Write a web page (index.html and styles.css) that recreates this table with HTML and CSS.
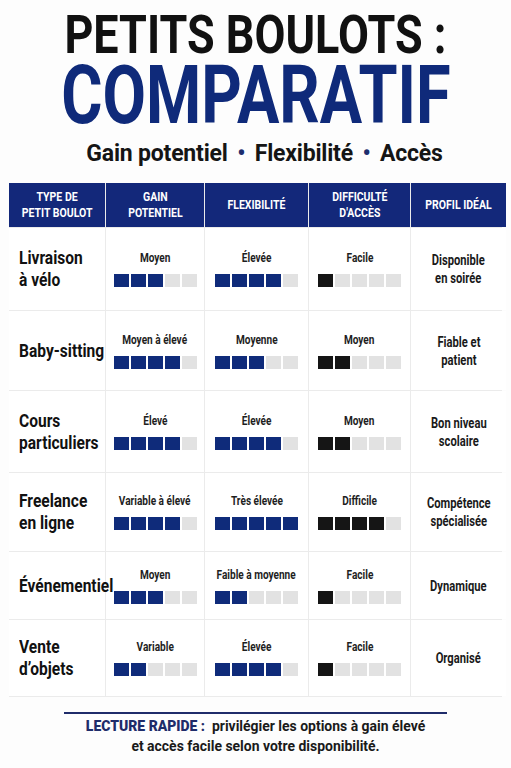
FILE: index.html
```html
<!DOCTYPE html>
<html lang="fr">
  <head>
    <meta charset="UTF-8" />
    <meta name="viewport" content="width=device-width, initial-scale=1.0" />
    <title>Petits boulots : comparatif</title>
    <link rel="stylesheet" href="styles.css">
  </head>
  <body>
    <div class="page">
      <h1 class="title">PETITS BOULOTS :</h1>
      <h2 class="title-big">COMPARATIF</h2>
      <p class="subtitle">Gain potentiel <span class="dot">•</span> Flexibilité <span class="dot">•</span> Accès</p>

      <div class="table">
        <div class="head"><span class="cx">TYPE DE<br>PETIT BOULOT</span></div>
        <div class="head"><span class="cx">GAIN<br>POTENTIEL</span></div>
        <div class="head"><span class="cx">FLEXIBILITÉ</span></div>
        <div class="head"><span class="cx">DIFFICULTÉ<br>D'ACCÈS</span></div>
        <div class="head"><span class="cx">PROFIL IDÉAL</span></div>

        <!-- Livraison -->
        <div class="cell name"><span class="cx">Livraison<br>à vélo</span></div>
        <div class="cell">
          <span class="label cx">Moyen</span>
          <div class="bar"><span class="on"></span><span class="on"></span><span class="on"></span><span></span><span></span></div>
        </div>
        <div class="cell">
          <span class="label cx">Élevée</span>
          <div class="bar"><span class="on"></span><span class="on"></span><span class="on"></span><span class="on"></span><span></span></div>
        </div>
        <div class="cell">
          <span class="label cx">Facile</span>
          <div class="bar dark"><span class="on"></span><span></span><span></span><span></span><span></span></div>
        </div>
        <div class="cell profile"><span class="cx">Disponible<br>en soirée</span></div>

        <!-- Baby-sitting -->
        <div class="cell name"><span class="cx">Baby-sitting</span></div>
        <div class="cell">
          <span class="label cx">Moyen à élevé</span>
          <div class="bar"><span class="on"></span><span class="on"></span><span class="on"></span><span class="on"></span><span></span></div>
        </div>
        <div class="cell">
          <span class="label cx">Moyenne</span>
          <div class="bar"><span class="on"></span><span class="on"></span><span class="on"></span><span></span><span></span></div>
        </div>
        <div class="cell">
          <span class="label cx">Moyen</span>
          <div class="bar dark"><span class="on"></span><span class="on"></span><span></span><span></span><span></span></div>
        </div>
        <div class="cell profile"><span class="cx">Fiable et<br>patient</span></div>

        <!-- Cours -->
        <div class="cell name"><span class="cx">Cours<br>particuliers</span></div>
        <div class="cell">
          <span class="label cx">Élevé</span>
          <div class="bar"><span class="on"></span><span class="on"></span><span class="on"></span><span class="on"></span><span></span></div>
        </div>
        <div class="cell">
          <span class="label cx">Élevée</span>
          <div class="bar"><span class="on"></span><span class="on"></span><span class="on"></span><span class="on"></span><span></span></div>
        </div>
        <div class="cell">
          <span class="label cx">Moyen</span>
          <div class="bar dark"><span class="on"></span><span class="on"></span><span></span><span></span><span></span></div>
        </div>
        <div class="cell profile"><span class="cx">Bon niveau<br>scolaire</span></div>

        <!-- Freelance -->
        <div class="cell name"><span class="cx">Freelance<br>en ligne</span></div>
        <div class="cell">
          <span class="label cx">Variable à élevé</span>
          <div class="bar"><span class="on"></span><span class="on"></span><span class="on"></span><span class="on"></span><span></span></div>
        </div>
        <div class="cell">
          <span class="label cx">Très élevée</span>
          <div class="bar"><span class="on"></span><span class="on"></span><span class="on"></span><span class="on"></span><span class="on"></span></div>
        </div>
        <div class="cell">
          <span class="label cx">Difficile</span>
          <div class="bar dark"><span class="on"></span><span class="on"></span><span class="on"></span><span class="on"></span><span></span></div>
        </div>
        <div class="cell profile"><span class="cx">Compétence<br>spécialisée</span></div>

        <!-- Evenementiel -->
        <div class="cell name"><span class="cx">Événementiel</span></div>
        <div class="cell">
          <span class="label cx">Moyen</span>
          <div class="bar"><span class="on"></span><span class="on"></span><span class="on"></span><span></span><span></span></div>
        </div>
        <div class="cell">
          <span class="label cx">Faible à moyenne</span>
          <div class="bar"><span class="on"></span><span class="on"></span><span></span><span></span><span></span></div>
        </div>
        <div class="cell">
          <span class="label cx">Facile</span>
          <div class="bar dark"><span class="on"></span><span></span><span></span><span></span><span></span></div>
        </div>
        <div class="cell profile"><span class="cx">Dynamique</span></div>

        <!-- Vente -->
        <div class="cell name"><span class="cx">Vente<br>d’objets</span></div>
        <div class="cell">
          <span class="label cx">Variable</span>
          <div class="bar"><span class="on"></span><span class="on"></span><span></span><span></span><span></span></div>
        </div>
        <div class="cell">
          <span class="label cx">Élevée</span>
          <div class="bar"><span class="on"></span><span class="on"></span><span class="on"></span><span class="on"></span><span></span></div>
        </div>
        <div class="cell">
          <span class="label cx">Facile</span>
          <div class="bar dark"><span class="on"></span><span></span><span></span><span></span><span></span></div>
        </div>
        <div class="cell profile"><span class="cx">Organisé</span></div>
      </div>

      <div class="footer">
        <span class="footer-text"><strong>LECTURE RAPIDE :</strong>&nbsp; privilégier les options à gain élevé<br>et accès facile selon votre disponibilité.</span>
      </div>
    </div>
  </body>
</html>
```

FILE: styles.css
```css
* {
  margin: 0;
  padding: 0;
  box-sizing: border-box;
}

body {
  font-family: 'Roboto', 'Liberation Sans', sans-serif;
  background: #fdfdfd;
  color: #151515;
}

.page {
  width: 511px;
  padding: 11px 9px 0;
  display: flex;
  flex-direction: column;
  align-items: center;
}

/* condensed look: Roboto squeezed horizontally */
.cx {
  display: inline-block;
  white-space: nowrap;
  transform: scaleX(0.84);
}

.title {
  font-size: 53.5px;
  line-height: 48px;
  font-weight: 700;
  color: #111;
  white-space: nowrap;
  transform: scaleX(0.84);
}

.title-big {
  font-size: 82px;
  line-height: 72px;
  font-weight: 700;
  color: #0f2a7a;
  white-space: nowrap;
  transform: scaleX(0.77);
}

.subtitle {
  margin-top: 9px;
  margin-left: 18px;
  font-size: 23px;
  line-height: 28px;
  font-weight: 700;
  color: #151515;
  letter-spacing: -0.2px;
}

.dot {
  color: #1d2e6e;
  margin: 0 4px;
}

.table {
  margin-top: 15px;
  width: 493px;
  display: grid;
  grid-template-columns: 96px 98px 103px 101px 95px;
  grid-template-rows: 44px 82px 79px 81px 78px 67px 76px;
  background: #ebebeb;
  gap: 1px;
  border-bottom: 1px solid #ebebeb;
}

.head {
  background: #13287a;
  color: #fff;
  font-size: 12.5px;
  font-weight: 700;
  line-height: 16px;
  text-align: center;
  display: flex;
  align-items: center;
  justify-content: center;
}

.cell {
  background: #fff;
  display: flex;
  flex-direction: column;
  align-items: center;
  justify-content: center;
  gap: 9px;
}

.cell.name {
  align-items: flex-start;
  padding-left: 10px;
  font-size: 18.5px;
  line-height: 22px;
  font-weight: 700;
  color: #111;
}

.cell.name .cx {
  transform-origin: left center;
}

.cell.profile {
  font-size: 14px;
  line-height: 18px;
  font-weight: 700;
  text-align: center;
  color: #1a1a1a;
}

.cell.profile .cx {
  transform: scaleX(0.8);
}

.label {
  font-size: 12px;
  font-weight: 700;
  color: #1e1e1e;
}

.bar {
  display: flex;
  gap: 2px;
}

.bar span {
  width: 15px;
  height: 13px;
  background: #e2e2e2;
}

.bar span.on {
  background: #0f2b7a;
}

.bar.dark span.on {
  background: #151515;
}

.footer {
  margin-top: 15px;
  width: 383px;
  border-top: 2px solid #1f2c6a;
  padding-top: 2px;
  text-align: center;
  font-size: 15.5px;
  line-height: 20px;
  font-weight: 700;
  color: #1a1a1a;
}

.footer-text {
  display: inline-block;
  white-space: nowrap;
  transform: scaleX(0.9);
}

.footer strong {
  color: #1f2c6a;
}
```
